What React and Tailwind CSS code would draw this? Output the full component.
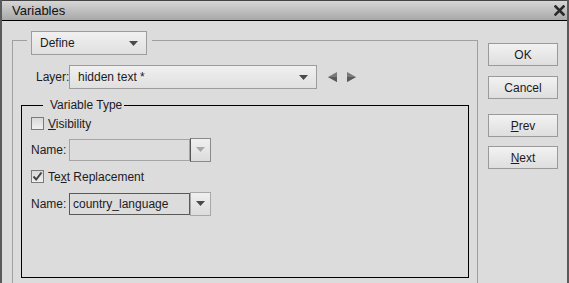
import React from 'react';

function Caret({ disabled }) {
    return (
        <svg width="9" height="5" viewBox="0 0 9 5" className="block">
            <polygon points="0,0 9,0 4.5,5" fill={disabled ? '#a8a8a8' : '#4a4a4a'} />
        </svg>
    );
}

function Dropdown({ label, className }) {
    return (
        <div className={`flex items-center justify-between border border-[#9c9c9c] bg-gradient-to-b from-[#f0f0f0] to-[#e0e0e0] ${className}`}>
            <span className="pl-[8px]">{label}</span>
            <span className="pr-[8px]"><Caret /></span>
        </div>
    );
}

function Btn({ children, className = '' }) {
    return (
        <div className={`h-[23px] w-[70px] flex items-center justify-center border border-[#9a9a9a] bg-gradient-to-b from-[#f2f2f2] to-[#dedede] ${className}`}>
            {children}
        </div>
    );
}

function Checkbox({ checked }) {
    return (
        <div className="w-[13px] h-[13px] border border-[#7a7a7a] bg-gradient-to-b from-[#d8d8d8] to-[#f0f0f0] flex items-center justify-center">
            {checked && (
                <svg width="11" height="11" viewBox="0 0 11 11">
                    <path d="M1.5 5.5 L4.2 8.5 L9.5 1.5" stroke="#444" strokeWidth="2" fill="none" />
                </svg>
            )}
        </div>
    );
}

function NameRow({ value, disabled, className }) {
    return (
        <div className={`flex items-center h-[25px] ${className}`}>
            <span className="w-[38px]">Name:</span>
            <div className={`w-[121px] h-[22px] flex items-center pl-[3px] border ${disabled ? 'border-[#a4a4a4]' : 'border-[#5a5a5a]'}`}>
                {value}
            </div>
            <div
                className={`w-[21px] h-[24px] flex items-center justify-center bg-gradient-to-b from-[#f0f0f0] to-[#dcdcdc] border ${
                    disabled ? 'border-[#8a8a8a] border-l-[#555]' : 'border-[#a8a8a8]'
                }`}
            >
                <Caret disabled={disabled} />
            </div>
        </div>
    );
}

export default function App() {
    return (
        <div className="w-[569px] h-[283px] overflow-hidden bg-[#dcdcdc] border-x-2 border-[#5a5a5a] font-['Liberation_Sans',sans-serif] text-[12px] leading-[14px] text-[#1e1a1e] flex flex-col">
            {/* title bar */}
            <div className="h-[21px] shrink-0 flex items-center justify-between border-t border-t-[#444] border-b border-b-black bg-gradient-to-b from-[#d6d6d6] to-[#a8a8a8]">
                <span className="pl-[10px] text-[13px] text-[#111]">Variables</span>
                <svg width="11" height="11" viewBox="0 0 11 11" className="mr-[2px]">
                    <path d="M1.5 1.5 L9.5 9.5 M9.5 1.5 L1.5 9.5" stroke="#2a2a2a" strokeWidth="2.6" strokeLinecap="square" />
                </svg>
            </div>

            <div className="flex flex-1 min-h-0">
                <fieldset className="ml-[10px] mt-[4px] w-[466px] h-[320px] shrink-0 border border-[#a0a0a0]">
                    <legend className="ml-[14px] pt-[6px] pl-[4px] pr-[5px]">
                        <Dropdown label="Define" className="w-[116px] h-[24px]" />
                    </legend>

                    <div className="flex items-center pl-[23px] mt-[10px]">
                        <span className="w-[33px]">Layer:</span>
                        <Dropdown label="hidden text *" className="w-[248px] h-[24px]" />
                        <div className="flex items-center gap-[10px] ml-[11px]">
                            <svg width="9" height="10" viewBox="0 0 9 10">
                                <polygon points="9,0 9,10 0,5" fill="#7a7a7a" />
                                <polygon points="9,5 9,10 0,5" fill="#5a5a5a" />
                            </svg>
                            <svg width="9" height="10" viewBox="0 0 9 10">
                                <polygon points="0,0 0,10 9,5" fill="#7a7a7a" />
                                <polygon points="0,5 0,10 9,5" fill="#5a5a5a" />
                            </svg>
                        </div>
                    </div>

                    <fieldset className="ml-[8px] mt-[9px] w-[448px] h-[180px] border border-black pl-[9px]">
                        <legend className="ml-[12px] pl-[7px] pr-[2px] leading-[14px]">Variable Type</legend>

                        <div className="flex items-center gap-[4px] h-[13px] mt-[5px]">
                            <Checkbox />
                            <span><span className="underline">V</span>isibility</span>
                        </div>

                        <NameRow disabled className="mt-[7px]" />

                        <div className="flex items-center gap-[4px] h-[13px] mt-[8px]">
                            <Checkbox checked />
                            <span>Te<span className="underline">x</span>t Replacement</span>
                        </div>

                        <NameRow value="country_language" className="mt-[8px]" />
                    </fieldset>
                </fieldset>

                <div className="ml-[10px] pt-[22px] flex flex-col">
                    <Btn>OK</Btn>
                    <Btn className="mt-[10px]">Cancel</Btn>
                    <Btn className="mt-[15px]"><span><span className="underline">P</span>rev</span></Btn>
                    <Btn className="mt-[9px]"><span><span className="underline">N</span>ext</span></Btn>
                </div>
            </div>
        </div>
    );
}
